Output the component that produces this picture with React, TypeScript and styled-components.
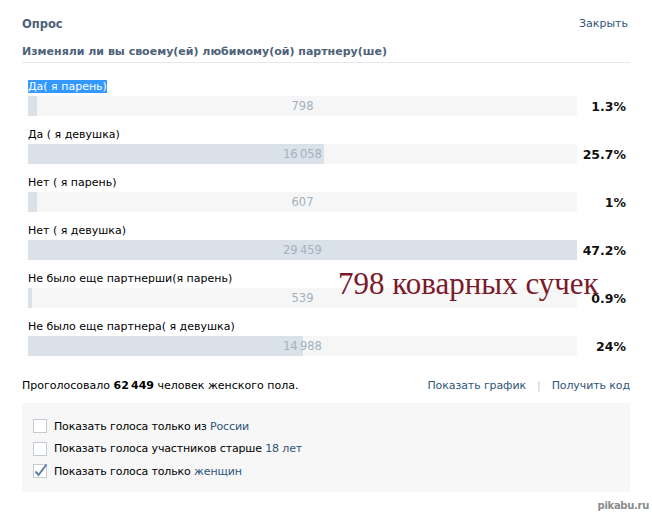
import React from 'react';
import styled, { createGlobalStyle } from 'styled-components';

const GlobalStyle = createGlobalStyle`
  html, body {
    margin: 0;
    padding: 0;
    background: #ffffff;
  }
  body {
    font-family: 'DejaVu Sans', Tahoma, sans-serif;
    font-size: 11px;
    color: #000;
  }
`;

interface IOption {
  label: string;
  votes: string;
  percent: string;
  fill: number;
  selected?: boolean;
}

const options: IOption[] = [
  { label: 'Да( я парень)', votes: '798', percent: '1.3%', fill: 1.7, selected: true },
  { label: 'Да ( я девушка)', votes: '16\u2009058', percent: '25.7%', fill: 54 },
  { label: 'Нет ( я парень)', votes: '607', percent: '1%', fill: 1.7 },
  { label: 'Нет ( я девушка)', votes: '29\u2009459', percent: '47.2%', fill: 100 },
  { label: 'Не было еще партнерши(я парень)', votes: '539', percent: '0.9%', fill: 0.8 },
  { label: 'Не было еще партнера( я девушка)', votes: '14\u2009988', percent: '24%', fill: 50 }
];

const Page = styled.div`
  position: relative;
  width: 652px;
  height: 513px;
  padding: 16px 22px 0 22px;
  box-sizing: border-box;
  overflow: hidden;
`;

const Header = styled.div`
  display: flex;
  justify-content: space-between;
  align-items: center;
  line-height: 16px;
  padding-right: 2px;
`;

const Caption = styled.div`
  font-weight: bold;
  font-size: 11.5px;
  color: #4d6178;
`;

const Link = styled.a`
  color: #2f5577;
  text-decoration: none;
  cursor: pointer;
`;

const Question = styled.div`
  margin-top: 12px;
  padding-bottom: 2px;
  line-height: 16px;
  font-weight: bold;
  color: #4d6178;
  border-bottom: 1px solid #e4e8ed;
`;

const OptionList = styled.div`
  margin-top: 16px;
  display: flex;
  flex-direction: column;
  gap: 11px;
`;

const OptionRow = styled.div`
  padding: 0 4px 0 6px;
`;

const OptionLabel = styled.div`
  line-height: 16px;
  margin-bottom: 1px;
`;

const Selected = styled.span<{ $active?: boolean }>`
  background: ${({ $active }) => ($active ? '#3399ff' : 'transparent')};
  color: ${({ $active }) => ($active ? '#ffffff' : 'inherit')};
`;

const BarLine = styled.div`
  display: flex;
  align-items: center;
`;

const Bar = styled.div`
  position: relative;
  width: 549px;
  height: 20px;
  background: #f6f6f6;
`;

const BarFill = styled.div`
  height: 100%;
  background: #dae1e8;
`;

const BarCount = styled.div`
  position: absolute;
  inset: 0;
  display: flex;
  align-items: center;
  justify-content: center;
  color: #a3b1bf;
  font-size: 11.5px;
`;

const Percent = styled.div`
  flex: 1;
  text-align: right;
  font-weight: bold;
  font-size: 12.5px;
  color: #111;
`;

const Footer = styled.div`
  margin-top: 22px;
  display: flex;
  justify-content: space-between;
  line-height: 16px;
  font-size: 11px;
`;

const Links = styled.div`
  display: flex;
  gap: 11px;
  letter-spacing: -0.1px;
`;

const Divider = styled.span`
  color: #c5ccd3;
`;

const Filters = styled.div`
  margin-top: 9px;
  background: #f7f7f7;
  padding: 12px 11px 11px;
  height: 89px;
  box-sizing: border-box;
`;

const FilterRow = styled.label`
  display: flex;
  align-items: center;
  gap: 7px;
  height: 22.5px;
  font-size: 11px;
  letter-spacing: -0.15px;
`;

const Box = styled.span`
  position: relative;
  width: 14px;
  height: 14px;
  border: 1px solid #c6ccd3;
  background: #ffffff;
  box-sizing: border-box;
  flex-shrink: 0;
`;

const Tick = styled.svg`
  position: absolute;
  left: -1px;
  top: -3px;
`;

const Accent = styled.span`
  color: #2f5577;
`;

const Stamp = styled.div`
  position: absolute;
  left: 338px;
  top: 266px;
  font-family: 'Liberation Serif', 'Times New Roman', serif;
  font-size: 31px;
  color: #7b1a2b;
  white-space: nowrap;
`;

const Watermark = styled.div`
  position: absolute;
  right: 3px;
  bottom: 2px;
  font-size: 10px;
  font-weight: bold;
  color: #8c8c8c;
  letter-spacing: -0.3px;
`;

const filters = [
  { text: 'Показать голоса только из ', accent: 'России', checked: false },
  { text: 'Показать голоса участников старше ', accent: '18 лет', checked: false },
  { text: 'Показать голоса только ', accent: 'женщин', checked: true }
];

export default function App() {
  return (
    <>
      <GlobalStyle />
      <Page>
        <Header>
          <Caption>Опрос</Caption>
          <Link>Закрыть</Link>
        </Header>
        <Question>Изменяли ли вы своему(ей) любимому(ой) партнеру(ше)</Question>
        <OptionList>
          {options.map((o) => (
            <OptionRow key={o.label}>
              <OptionLabel>
                <Selected $active={o.selected}>{o.label}</Selected>
              </OptionLabel>
              <BarLine>
                <Bar>
                  <BarFill style={{ width: `${o.fill}%` }} />
                  <BarCount>{o.votes}</BarCount>
                </Bar>
                <Percent>{o.percent}</Percent>
              </BarLine>
            </OptionRow>
          ))}
        </OptionList>
        <Footer>
          <span>
            Проголосовало <b>62{'\u2009'}449</b> человек женского пола.
          </span>
          <Links>
            <Link>Показать график</Link>
            <Divider>|</Divider>
            <Link>Получить код</Link>
          </Links>
        </Footer>
        <Filters>
          {filters.map((f) => (
            <FilterRow key={f.accent}>
              <Box>
                {f.checked && (
                  <Tick width="16" height="16" viewBox="0 0 16 16">
                    <path d="M2.5 9.5 L5.5 13 L13.5 2.5" fill="none" stroke="#5b7ea6" strokeWidth="2" />
                  </Tick>
                )}
              </Box>
              <span>
                {f.text}
                <Accent>{f.accent}</Accent>
              </span>
            </FilterRow>
          ))}
        </Filters>
        <Stamp>798 коварных сучек</Stamp>
        <Watermark>pikabu.ru</Watermark>
      </Page>
    </>
  );
}
